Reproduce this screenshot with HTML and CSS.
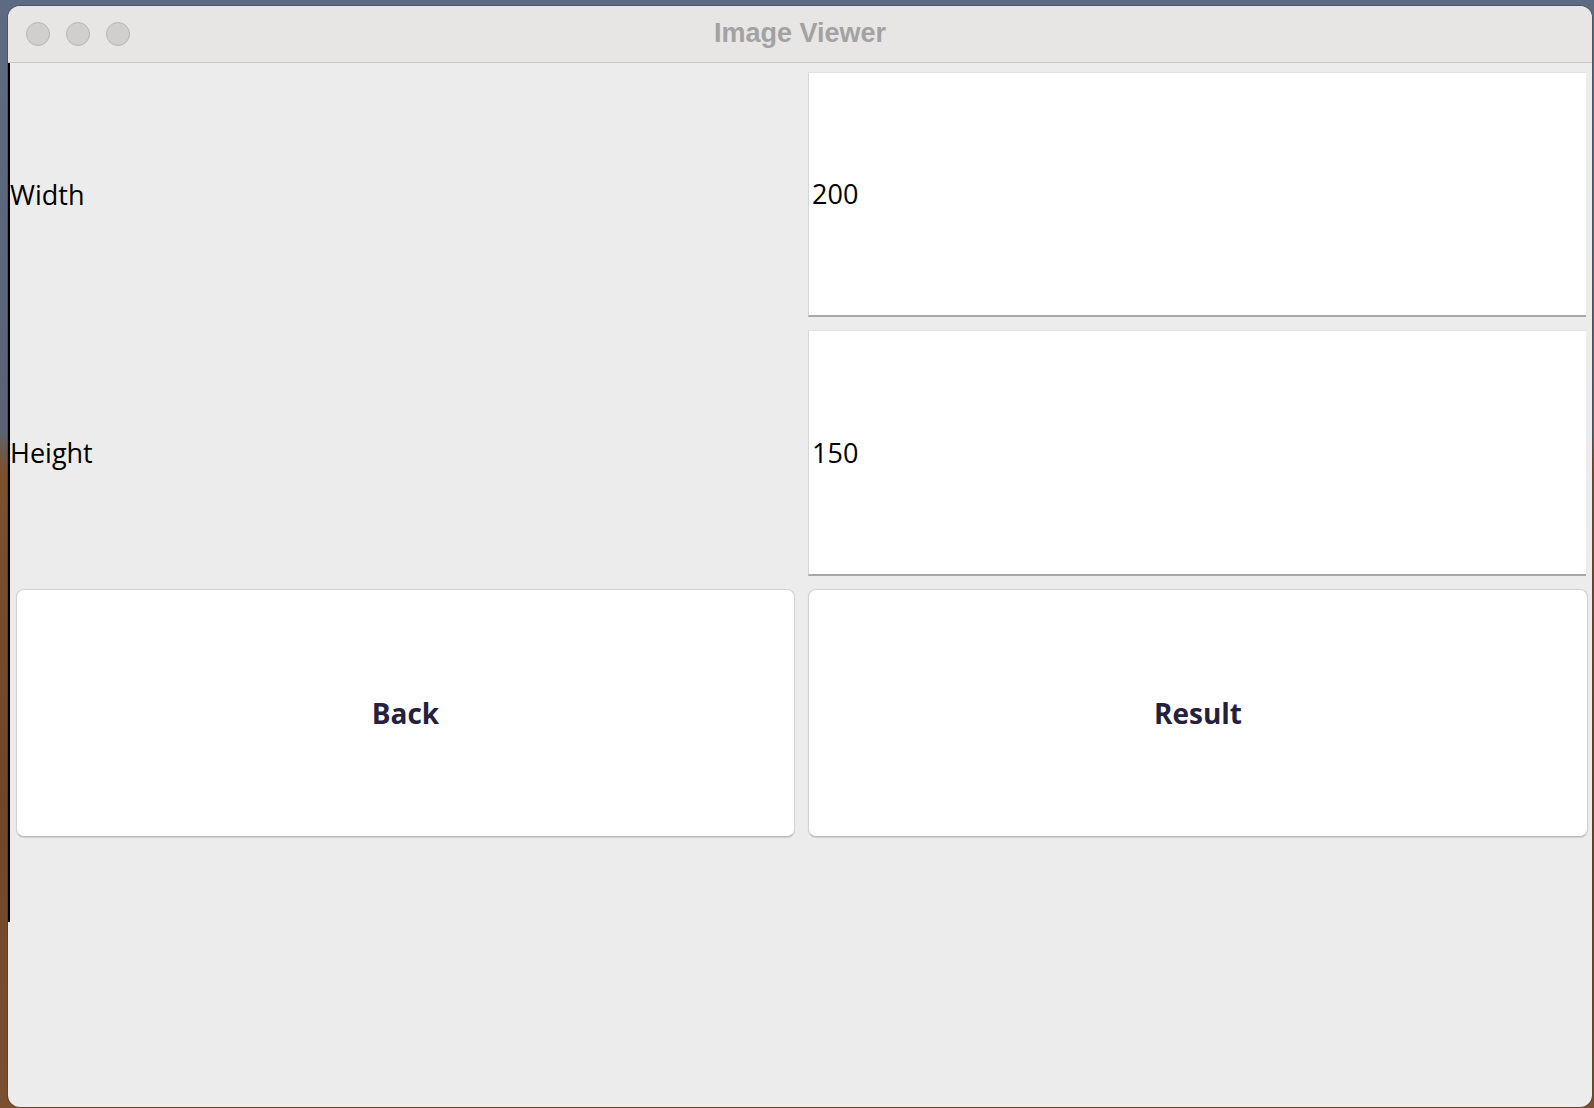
FILE: index.html
```html
<!DOCTYPE html>
<html>
<head>
<meta charset="utf-8">
<title>Image Viewer</title>
<link rel="stylesheet" href="styles.css">
</head>
<body>
<div class="desktop">
  <div class="window">
    <div class="titlebar">
      <div class="lights">
        <span class="light"></span>
        <span class="light"></span>
        <span class="light"></span>
      </div>
      <div class="title">Image Viewer</div>
      <div class="spacer"></div>
    </div>
    <div class="panel">
      <div class="form">
        <div class="label">Width</div>
        <div class="field">200</div>
        <div class="label">Height</div>
        <div class="field">150</div>
        <div class="btn btn-left">Back</div>
        <div class="btn btn-right">Result</div>
      </div>
    </div>
    <div class="filler"></div>
  </div>
</div>
</body>
</html>
```

FILE: styles.css
```css
html, body {
  margin: 0;
  padding: 0;
}
body {
  width: 1594px;
  height: 1108px;
  overflow: hidden;
}
.desktop {
  box-sizing: border-box;
  height: 1108px;
  padding: 6px 2px 0 8px;
  background: linear-gradient(to bottom, #5c6b83 0px, #5b6374 430px, #7b512e 470px, #6f4727 800px, #7a5030 1108px);
}
.window {
  height: 1101px;
  border-radius: 12px;
  background: #ececec;
  overflow: hidden;
  display: flex;
  flex-direction: column;
  box-shadow: 0 0 0 1px rgba(0, 0, 0, 0.18);
}
.titlebar {
  box-sizing: border-box;
  height: 57px;
  flex: none;
  background: #e8e6e4;
  border-bottom: 1px solid #c8c7c5;
  display: grid;
  grid-template-columns: 1fr auto 1fr;
  align-items: center;
  padding-left: 18px;
  padding-right: 18px;
}
.lights {
  display: flex;
  gap: 16px;
  margin-top: -1px;
}
.light {
  box-sizing: border-box;
  width: 24px;
  height: 24px;
  border-radius: 50%;
  background: #d0cfcd;
  border: 1px solid #b7b6b4;
}
.title {
  font-family: "Liberation Sans", Arial, sans-serif;
  font-weight: bold;
  font-size: 27px;
  color: #a2a2a2;
  margin-top: -1px;
}
.panel {
  box-sizing: border-box;
  height: 859px;
  flex: none;
  border-left: 2px solid #000;
  padding-top: 9px;
}
.form {
  display: grid;
  grid-template-columns: 792px 780px;
  grid-template-rows: 245px 246px 248px;
  column-gap: 6px;
  row-gap: 13px;
}
.label {
  font-family: "Open Sans", "DejaVu Sans", sans-serif;
  font-size: 27px;
  color: #000;
  display: flex;
  align-items: center;
  padding-bottom: 1px;
}
.field {
  box-sizing: border-box;
  width: 778px;
  background: #fff;
  border-left: 1px solid #d6d6d6;
  border-top: 1px solid #e2e2e2;
  border-bottom: 2px solid #a8a8a8;
  display: flex;
  align-items: center;
  padding-left: 3px;
  padding-bottom: 1px;
  font-family: "Open Sans", "DejaVu Sans", sans-serif;
  font-size: 27px;
  color: #000;
}
.btn {
  box-sizing: border-box;
  background: #fff;
  border: 1px solid #d2d2d2;
  border-bottom-color: #b8b8b8;
  border-radius: 8px;
  box-shadow: 0 1px 1px rgba(0, 0, 0, 0.12);
  display: flex;
  align-items: center;
  justify-content: center;
  font-family: "Open Sans", "DejaVu Sans", sans-serif;
  font-weight: bold;
  font-size: 28px;
  color: #25213c;
}
.btn-left {
  margin-left: 6px;
  margin-right: 7px;
}
.btn-right {
  margin-right: 0px;
}
.filler {
  flex: 1;
}
```
